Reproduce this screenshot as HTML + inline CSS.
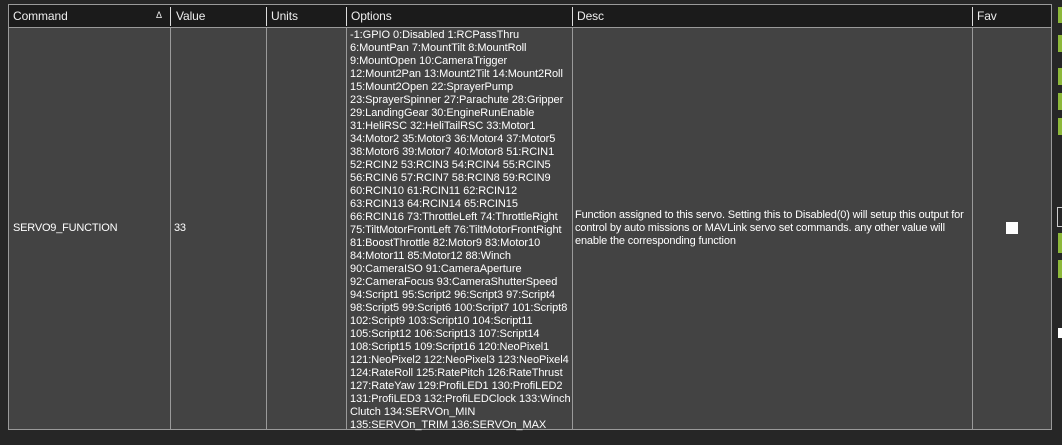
<!DOCTYPE html>
<html><head><style>
body{margin:0;width:1062px;height:445px;background:#262626;position:relative;overflow:hidden;font-family:"Liberation Sans",sans-serif;color:#fff}
.t{position:absolute;left:8px;top:4px;width:1044px;height:426px;background:#434343;border:1px solid #9a9a9a;box-sizing:border-box}
.h{position:absolute;left:0;top:0;width:100%;height:23px;background:#1b1b1b;border-bottom:1px solid #9a9a9a;box-sizing:border-box}
.hc{position:absolute;top:4px;font-size:12px;letter-spacing:-0.1px;color:#eee}
.hs{position:absolute;top:2px;width:1px;height:19px;background:#ddd}
.vl{position:absolute;top:23px;bottom:0;width:1px;background:#9a9a9a}
.c{position:absolute;font-size:11px;letter-spacing:-0.2px;line-height:13px;white-space:nowrap}
.o{letter-spacing:-0.05px}
.g{position:absolute;left:1058px;width:6px;background:#8db83a}
</style></head><body>
<div class="t">
<div class="h">
<span class="hc" style="left:4px">Command</span><span class="hc" style="left:147px;font-size:9px;top:5px">&#916;</span>
<div class="hs" style="left:161px"></div><span class="hc" style="left:167px">Value</span>
<div class="hs" style="left:257px"></div><span class="hc" style="left:262px">Units</span>
<div class="hs" style="left:337px"></div><span class="hc" style="left:342px">Options</span>
<div class="hs" style="left:563px"></div><span class="hc" style="left:568px">Desc</span>
<div class="hs" style="left:963px"></div><span class="hc" style="left:968px">Fav</span>
</div>
<div class="vl" style="left:161px"></div><div class="vl" style="left:257px"></div><div class="vl" style="left:337px"></div><div class="vl" style="left:563px"></div><div class="vl" style="left:963px"></div>
<div class="c" style="left:4px;top:217px">SERVO9_FUNCTION</div>
<div class="c" style="left:165px;top:217px">33</div>
<div class="c o" style="left:341px;top:24px">-1:GPIO 0:Disabled 1:RCPassThru<br>6:MountPan 7:MountTilt 8:MountRoll<br>9:MountOpen 10:CameraTrigger<br>12:Mount2Pan 13:Mount2Tilt 14:Mount2Roll<br>15:Mount2Open 22:SprayerPump<br>23:SprayerSpinner 27:Parachute 28:Gripper<br>29:LandingGear 30:EngineRunEnable<br>31:HeliRSC 32:HeliTailRSC 33:Motor1<br>34:Motor2 35:Motor3 36:Motor4 37:Motor5<br>38:Motor6 39:Motor7 40:Motor8 51:RCIN1<br>52:RCIN2 53:RCIN3 54:RCIN4 55:RCIN5<br>56:RCIN6 57:RCIN7 58:RCIN8 59:RCIN9<br>60:RCIN10 61:RCIN11 62:RCIN12<br>63:RCIN13 64:RCIN14 65:RCIN15<br>66:RCIN16 73:ThrottleLeft 74:ThrottleRight<br>75:TiltMotorFrontLeft 76:TiltMotorFrontRight<br>81:BoostThrottle 82:Motor9 83:Motor10<br>84:Motor11 85:Motor12 88:Winch<br>90:CameraISO 91:CameraAperture<br>92:CameraFocus 93:CameraShutterSpeed<br>94:Script1 95:Script2 96:Script3 97:Script4<br>98:Script5 99:Script6 100:Script7 101:Script8<br>102:Script9 103:Script10 104:Script11<br>105:Script12 106:Script13 107:Script14<br>108:Script15 109:Script16 120:NeoPixel1<br>121:NeoPixel2 122:NeoPixel3 123:NeoPixel4<br>124:RateRoll 125:RatePitch 126:RateThrust<br>127:RateYaw 129:ProfiLED1 130:ProfiLED2<br>131:ProfiLED3 132:ProfiLEDClock 133:Winch<br>Clutch 134:SERVOn_MIN<br>135:SERVOn_TRIM 136:SERVOn_MAX</div>
<div class="c" style="left:566px;top:204px;letter-spacing:-0.15px">Function assigned to this servo. Setting this to Disabled(0) will setup this output for<br>control by auto missions or MAVLink servo set commands. any other value will<br>enable the corresponding function</div>
<div style="position:absolute;left:997px;top:217px;width:12px;height:12px;background:#fff"></div>
</div>
<div class="g" style="top:7px;height:16px"></div>
<div class="g" style="top:35px;height:17px"></div>
<div class="g" style="top:68px;height:17px"></div>
<div class="g" style="top:93px;height:17px"></div>
<div class="g" style="top:118px;height:17px"></div>
<div style="position:absolute;left:1057px;top:207px;width:8px;height:18px;border:1px solid #ccc"></div>
<div class="g" style="top:233px;height:20px"></div>
<div class="g" style="top:260px;height:18px"></div>
<div style="position:absolute;left:1058px;top:328px;width:6px;height:10px;background:#fff"></div>
</body></html>
